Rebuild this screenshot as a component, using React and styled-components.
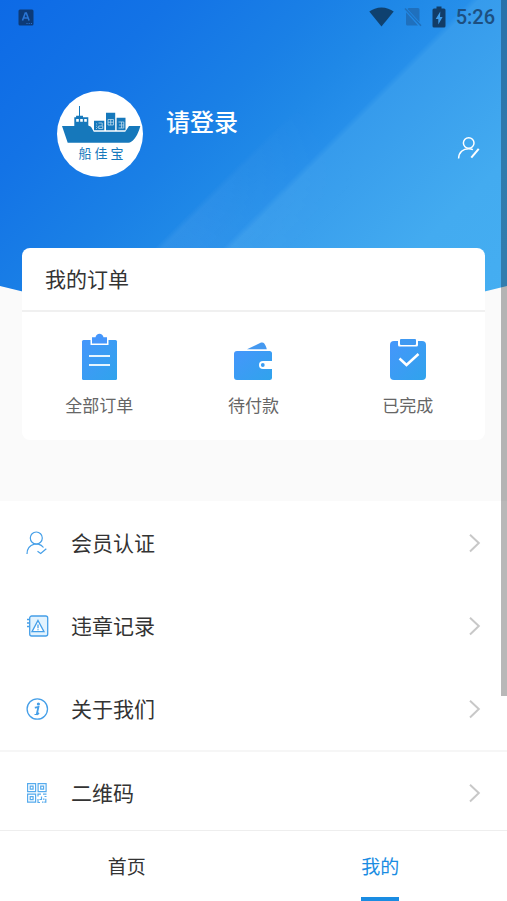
import React, { useState } from 'react';
import styled, { createGlobalStyle } from 'styled-components';

const ACCENT = '#1a8ce2';

const App = () => {
  const [tab, setTab] = useState('mine');

  return (
    <Screen>
      <GlobalStyle />
      <Content>
        <Hero>
          <StatusBar>
            <KeyboardIcon />
            <StatusIcons>
              <WifiIcon />
              <NoSimIcon />
              <BatteryIcon />
              <Clock>5:26</Clock>
            </StatusIcons>
          </StatusBar>
          <Profile>
            <Avatar>
              <ShipLogo />
            </Avatar>
            <LoginLink href="#login">请登录</LoginLink>
            <EditButton type="button" aria-label="编辑资料">
              <EditUserIcon />
            </EditButton>
          </Profile>
        </Hero>

        <OrderCard>
          <OrderTitle>我的订单</OrderTitle>
          <OrderGrid>
            {orders.map(({ label, Icon }) => (
              <OrderItem key={label} type="button">
                <Icon />
                <span>{label}</span>
              </OrderItem>
            ))}
          </OrderGrid>
        </OrderCard>

        <Menu>
          {menu.map(({ label, Icon, divided }) => (
            <MenuItem key={label} $divided={divided}>
              <MenuLink href="#menu">
                <Icon />
                <MenuLabel>{label}</MenuLabel>
                <ChevronIcon />
              </MenuLink>
            </MenuItem>
          ))}
        </Menu>
      </Content>

      <TabBar>
        {tabs.map(({ id, label }) => (
          <Tab key={id} type="button" $active={tab === id} onClick={() => setTab(id)}>
            <TabLabel $active={tab === id}>{label}</TabLabel>
          </Tab>
        ))}
      </TabBar>
      <ScrollThumb />
    </Screen>
  );
};

export default App;


/* status bar icons */

const KeyboardIcon = () => (
  <svg width="16" height="17" viewBox="0 0 16 17">
    <rect width="15" height="16" x="0.5" y="0.5" rx="1.5" fill="#0c3a78" />
    <path d="M4.500 11.500 7.300 4h1l2.800 7.500M5.500 9h4.500" fill="none" stroke="#2a76d6" strokeWidth="1.6" />
    <path d="M8.500 14.500h1M10.700 14.500h1M12.900 14.500h1" stroke="#2a76d6" strokeWidth="1" />
  </svg>
);

const WifiIcon = () => (
  <svg width="25" height="20" viewBox="0 0 25 20">
    <path d="M12.5 19.5.3 4.6C3.5 2 7.800.4 12.500.4S21.500 2 24.700 4.600Z" fill="#0f416f" />
  </svg>
);

const NoSimIcon = () => (
  <svg width="18" height="20" viewBox="0 0 18 20">
    <path d="M4.500 1H14a1.500 1.500 0 0 1 1.500 1.500V15L3.500 2ZM2 5.200 14 18.500H3.500A1.500 1.500 0 0 1 2 17Z" fill="#1f70bd" />
    <path d="M1 1.500 17 18.800" stroke="#1f70bd" strokeWidth="1.5" />
  </svg>
);

const BatteryIcon = () => (
  <svg width="14" height="22" viewBox="0 0 14 22">
    <path d="M4.500.5h5v2H12A1.500 1.500 0 0 1 13.500 4v16a1.500 1.500 0 0 1-1.500 1.500H2A1.500 1.500 0 0 1 .5 20V4A1.500 1.500 0 0 1 2 2.500h2.500Z" fill="#123c66" />
    <path d="M8.300 5.500 3.700 13h2.600v5.500L10.600 11H8Z" fill="#3d9be8" />
  </svg>
);

/* profile */

const ShipLogo = () => (
  <svg width="86" height="86" viewBox="0 0 86 86">
    <g fill="#1678bb">
      <path d="M5 35h12.300v-8.700h1.800v-1.500H22V15h1v9.800h3v1.500h5.300v8.200l2.700 1.200 2.800 5H68.200L72 35h11.300c-1.500 6-4.300 12-8 15-1.500 1.300-3 1.800-5.500 1.800H10.700Z" />
      <path d="M37 29.700h10.300v9.600H37ZM49 21.700h9.200v17.600H49ZM59.600 26.700h8.900v12.600h-8.900Z" />
    </g>
    <path d="M19.200 28h2.600v2.800h-2.600ZM23.200 28h2.600v2.800h-2.600ZM27.200 28h2.600v2.800h-2.600Z" fill="#fff" />
    <g fill="none" stroke="#bfdcee" strokeWidth="0.8">
      <path d="M39 32.500l1.200 1M39 35l1 .5M39 38l1.500-1.500M41.500 32h3.700v3h-3.500v2.500h4V35" />
      <path d="M51 28.500h5.500v5.500H51ZM51 31.200h5.500M53.700 28.500v5.500" />
      <path d="M61.500 31h5.300v6h-5.300M62 34h2.500M64.500 31v6M66 33v2.500" />
    </g>
    <g fill="#1678bb" fontSize="13" fontFamily='"Noto Sans CJK SC", sans-serif' textAnchor="middle">
      <text x="28" y="67">船</text>
      <text x="44" y="67">佳</text>
      <text x="60" y="67">宝</text>
    </g>
  </svg>
);

const EditUserIcon = () => (
  <svg width="24" height="24" viewBox="0 0 24 24" fill="none" stroke="#fff" strokeWidth="1.5">
    <circle cx="11.7" cy="7" r="5.3" />
    <path d="M1.600 22.500C1.800 16.300 6 12.700 11.700 12.700c1.600 0 3 .3 4.200.9" />
    <path d="M14.300 21.700 21.700 12.800" strokeWidth="2" />
  </svg>
);

/* order icons */

const BlueFill = ({ id }) => (
  <linearGradient id={id} x1="0" y1="0" x2="1" y2="1">
    <stop offset="0" stopColor="#4596fb" />
    <stop offset="1" stopColor="#30a3ec" />
  </linearGradient>
);

const AllOrdersIcon = () => (
  <svg width="48" height="48" viewBox="0 0 48 48">
    <BlueFill id="all" />
    <rect x="7" y="7" width="35" height="40" rx="1.5" fill="url(#all)" />
    <path d="M15.500 5.500h18V12h-18Z" fill="#fff" />
    <path d="M17 10.500V4.300h3.500C21 2 22.500.8 24.500.8s3.500 1.200 4 3.500H32v6.200Z" fill="#4596fb" />
    <path d="M14 23h21M14 32h21" stroke="#e6f5ff" strokeWidth="2" />
  </svg>
);

const UnpaidIcon = () => (
  <svg width="48" height="48" viewBox="0 0 48 48">
    <BlueFill id="unpaid" />
    <path d="M18 16.300 31.500 9.800c1.600-.7 3-.4 3.800.8 1 1.500 2 3.500 2.500 5.700Z" fill="#4599f0" />
    <path d="M8 18h32.500a2.500 2.500 0 0 1 2.500 2.500v24a2.500 2.500 0 0 1-2.500 2.500H8a3 3 0 0 1-3-3V21a3 3 0 0 1 3-3Z" fill="url(#unpaid)" />
    <path d="M43 28h-9a4 4 0 0 0 0 8h9Z" fill="#fff" />
    <circle cx="33.8" cy="32" r="1.9" fill="#3b9df3" />
  </svg>
);

const DoneIcon = () => (
  <svg width="48" height="48" viewBox="0 0 48 48">
    <BlueFill id="done" />
    <rect x="6" y="8" width="36" height="39" rx="4" fill="url(#done)" />
    <path d="M14 5h20v7a1.500 1.500 0 0 1-1.500 1.500h-17A1.500 1.500 0 0 1 14 12Z" fill="#fff" />
    <rect x="16" y="6" width="16" height="6" rx="1" fill="#3f99f2" />
    <path d="M15.500 25.500 22.500 32l12-11" fill="none" stroke="#fff" strokeWidth="2.5" />
  </svg>
);

/* menu icons */

const MemberIcon = () => (
  <svg width="24" height="24" viewBox="0 0 24 24" fill="none" stroke="#459fe8" strokeWidth="1.2">
    <circle cx="11.3" cy="7" r="6" />
    <path d="M2 23c0-5.300 2.700-8.700 7.300-9.900h4c2.200.5 4 1.700 5.200 3.400" />
    <path d="M12.500 20.300 15.700 22.500 21.300 17.700" />
  </svg>
);

const RecordIcon = () => (
  <svg width="24" height="24" viewBox="0 0 24 24" fill="none" stroke="#459fe8" strokeWidth="1.3">
    <rect x="4.7" y="2" width="18" height="20" rx="2" fill="#e3f3fe" />
    <path d="M13 6.500 19 17.700H7Z" fill="#fff" />
    <path d="M13 10.500v3.700M13 15.300v1" />
    <path d="M2 5.500h3M2 9h3M2 12.500h3" />
  </svg>
);

const InfoIcon = () => (
  <svg width="24" height="24" viewBox="0 0 24 24" fill="none" stroke="#459fe8">
    <circle cx="12.3" cy="12" r="10.2" strokeWidth="1.3" />
    <circle cx="13.4" cy="7" r="1.6" fill="#459fe8" stroke="none" />
    <path d="M9.800 10.700c1.300-.2 2.200-.5 3.600-.7l-1.500 6.700c-.1.700.4.700 1 .1l1-1" strokeWidth="1.8" />
    <path d="M9.500 17.500h3" />
  </svg>
);

const QrIcon = () => (
  <svg width="24" height="24" viewBox="0 0 24 24" fill="none" stroke="#56abed" strokeWidth="1.2">
    <path d="M2.600 2.600h8v8h-8ZM13.100 2.600h8v8h-8ZM2.600 13.100h8v8h-8Z" />
    <path d="M5.200 5.200h2.900v2.900H5.200ZM15.700 5.200h2.900v2.900h-2.900ZM5.200 15.700h2.900v2.900H5.200Z" />
    <path d="M13 15.500v-2.400h3M18 13.100h3.500M19.500 15.500h2M13 18v3.500h2M14.500 18.500h2v-3M17 21.200h1.500M20.800 17.700v3.500h-1.500M18 18.200h1.500" />
  </svg>
);

const ChevronIcon = () => (
  <svg width="12" height="20" viewBox="0 0 12 20">
    <path d="M1 1.700 9.800 10 1 18.500" fill="none" stroke="#c8c8c8" strokeWidth="2" />
  </svg>
);

const orders = [
  { label: '全部订单', Icon: AllOrdersIcon },
  { label: '待付款', Icon: UnpaidIcon },
  { label: '已完成', Icon: DoneIcon },
];

const menu = [
  { label: '会员认证', Icon: MemberIcon },
  { label: '违章记录', Icon: RecordIcon },
  { label: '关于我们', Icon: InfoIcon },
  { label: '二维码', Icon: QrIcon, divided: true },
];

const tabs = [
  { id: 'home', label: '首页' },
  { id: 'mine', label: '我的' },
];


const GlobalStyle = createGlobalStyle`
  * {
    box-sizing: border-box;
  }
  body {
    margin: 0;
    font-family: "Noto Sans CJK SC", sans-serif;
    color: #333;
    background: #fff;
  }
  button {
    font: inherit;
    color: inherit;
    padding: 0;
    border: 0;
    background: none;
    cursor: pointer;
  }
  a {
    color: inherit;
    text-decoration: none;
  }
  svg {
    display: block;
    flex: none;
  }
`

const Screen = styled.div`
  display: flex;
  flex-direction: column;
  height: 100vh;
`

const Content = styled.main`
  flex: 1;
  min-height: 0;
  overflow-y: auto;
  scrollbar-width: none;
  background: #fafafa;
`

const Hero = styled.header`
  position: relative;
  padding-bottom: 171px;
  background: linear-gradient(
    135deg,
    #0d6ae6 0%,
    #1373e6 20%,
    #1a80e6 38%,
    #1f88e7 47%,
    #268fea 55%,
    #369bec 56%,
    #43abf0 78%,
    #45aff2 100%
  );
  clip-path: polygon(0 0, 100% 0, 100% 286px, 50% 100%, 0 286px);

  /* light band that fades out towards the top right */
  &::before {
    content: '';
    position: absolute;
    inset: 0;
    z-index: -1;
    background: linear-gradient(135deg, transparent 47%, rgba(255, 255, 255, 0.07) 48%, transparent 65%);
    mask-image: linear-gradient(45deg, #000 35%, transparent 65%);
  }
`

const StatusBar = styled.div`
  display: flex;
  align-items: center;
  justify-content: space-between;
  height: 34px;
  padding: 0 12px 0 18px;
`

const StatusIcons = styled.div`
  display: flex;
  align-items: center;
  gap: 10px;
`

const Clock = styled.time`
  font: 500 20px/24px Roboto, sans-serif;
  color: #1d4f80;
`

const Profile = styled.div`
  display: flex;
  align-items: flex-start;
  padding: 57px 26px 0 57px;
`

const Avatar = styled.div`
  border-radius: 50%;
  background: #fff;
`

const LoginLink = styled.a`
  margin: 12px auto 0 23px;
  font-size: 24px;
  line-height: 36px;
  font-weight: 500;
  color: #fff;
`

const EditButton = styled.button`
  margin-top: 45px;
`

const OrderCard = styled.section`
  position: relative;
  margin: -100px 22px 61px;
  border-radius: 8px;
  background: #fff;
`

const OrderTitle = styled.h2`
  margin: 0;
  padding: 14px 23px 16px;
  border-bottom: 2px solid #f0f0f0;
  font-size: 21px;
  line-height: 32px;
  font-weight: 400;
`

const OrderGrid = styled.div`
  display: grid;
  grid-template-columns: repeat(3, 1fr);
`

const OrderItem = styled.button`
  display: flex;
  flex-direction: column;
  align-items: center;
  gap: 11px;
  padding: 21px 0 22px;
  font-size: 17px;
  line-height: 26px;
  color: #666;
`

const Menu = styled.ul`
  margin: 0;
  padding: 0;
  list-style: none;
  background: #fff;
`

const MenuItem = styled.li`
  height: 83px;
  border-top: ${({ $divided }) => ($divided ? '2px solid #f6f6f6' : '0')};
`

const MenuLink = styled.a`
  display: flex;
  align-items: center;
  height: 100%;
  padding: 0 26px 0 25px;
`

const MenuLabel = styled.span`
  flex: 1;
  margin-left: 22px;
  padding-bottom: 2px;
  font-size: 21px;
  line-height: 32px;
`

const TabBar = styled.nav`
  display: flex;
  height: 71px;
  border-top: 1px solid #eee;
  background: #fff;
`

const Tab = styled.button`
  display: flex;
  flex: 1;
  justify-content: center;
  color: ${({ $active }) => ($active ? ACCENT : '#333')};
`

const TabLabel = styled.span`
  height: 100%;
  font-size: 19px;
  line-height: 70px;
  border-bottom: 4px solid ${({ $active }) => ($active ? ACCENT : 'transparent')};
`

const ScrollThumb = styled.div`
  position: fixed;
  top: 0;
  right: 0;
  width: 6px;
  height: 696px;
  background: rgba(0, 0, 0, 0.28);
`
